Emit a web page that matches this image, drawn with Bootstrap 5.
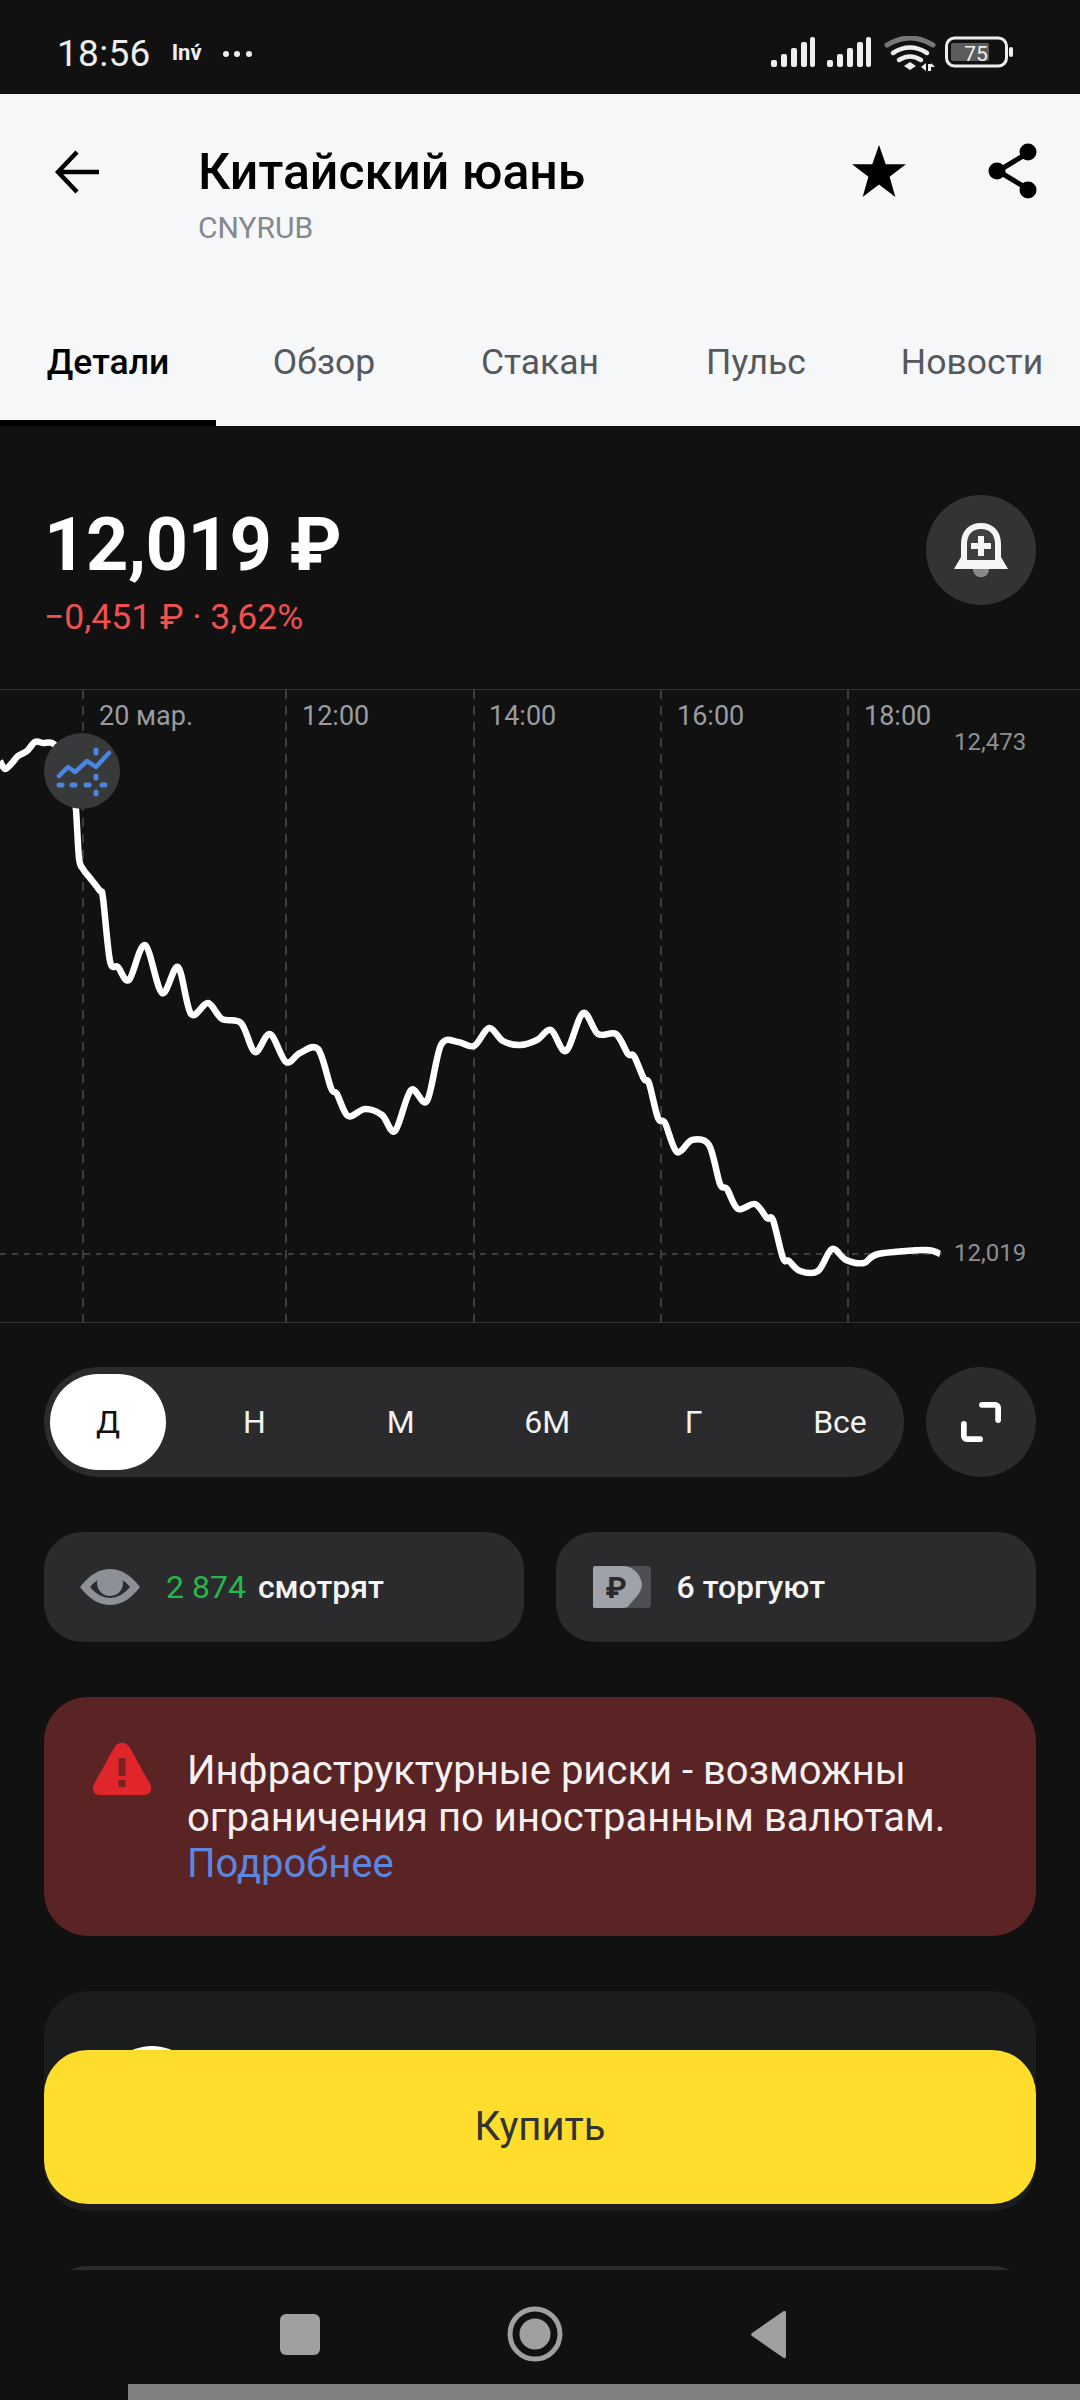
<!DOCTYPE html>
<html lang="ru">
<head>
<meta charset="utf-8">
<title>Китайский юань</title>
<link href="https://cdn.jsdelivr.net/npm/bootstrap@5.3.0/dist/css/bootstrap.min.css" rel="stylesheet">
<style>
html,body{margin:0;background:#111112;font-family:Roboto,"Liberation Sans",sans-serif}
.page-shell{width:1080px;height:2400px;overflow:hidden;background:#111112}
.status-strip{height:94px;padding:38px 64px 0 57px;color:#eee}
.clock{font-size:37px;line-height:32px;letter-spacing:.3px}
.inv{font-size:22px;font-weight:700;line-height:21px;margin-left:21px}
.dots{margin-left:19px}
.head-panel{background:#f6f7f9;height:332px;color:#000}
.title-row{height:226px;padding:49px 42px 0 55px}
.back-col{width:143px;padding-top:7px}
.asset-name{font-size:50px;font-weight:500;line-height:58px;margin:0;letter-spacing:0}
.asset-code{font-size:30px;line-height:32px;color:#85888d;margin-top:11px}
.tab-bar{height:106px;flex-wrap:nowrap}
.tab-bar .nav-link{width:216px;height:106px;padding:0 0 6px;text-align:center;font-size:35.500px;line-height:84px;color:#55585c;border-radius:0;background:none}
.tab-bar .nav-link.active{color:#000;background:none;font-weight:500;border-bottom:6px solid #000;padding-bottom:0}
.quote-panel{height:263px;padding:69px 44px 0 44px}
.price-big{font-size:74px;font-weight:700;line-height:60px;color:#fff;padding-top:20px;letter-spacing:-.5px}
.price-delta{font-size:35.500px;line-height:40px;color:#ef5050;margin-top:22px}
.round-btn{width:110px;height:110px;background:#333335;border:0;padding:0;border-radius:50%}
.chart-box{position:relative;height:634px;border-top:1px solid #333;border-bottom:1px solid #333}
.chart-box svg.plot{display:block}
.plot text{font-family:Roboto,"Liberation Sans",sans-serif}
.marker-chip{position:absolute;left:44px;top:43px;width:76px;height:76px;border-radius:50%;background:#38393b}
.range-row{padding:44px 44px 0 44px;gap:22px}
.range-pill{flex:1;height:110px;background:#2b2b2d;border-radius:55px;padding:7px 6px}
.range-pill .btn{width:116px;height:96px;padding:0;font-size:32px;color:#f2f2f2;border:0;border-radius:48px;background:none}
.range-pill .btn.active{background:#fff;color:#111}
.range-row .round-btn{background:#2b2b2d}
.stat-row{padding:55px 44px 0;gap:32px}
.stat-chip{flex:1;height:110px;background:#2b2b2d;border-radius:38px;font-size:32px;color:#f4f4f4;font-weight:500}
.num-green{color:#22b84b;font-weight:400}
.risk-box{margin:55px 44px 0;height:239px;background:#5a2324;border:0;border-radius:44px;padding:51px 30px 0 48px;color:#f6f0f0;font-size:40px;line-height:46.5px}
.risk-box a{color:#5b87e0;text-decoration:none;display:block}
.risk-txt{margin-left:35px;white-space:nowrap}
.dim-card{margin:55px 44px 0;height:220px;background:#1b1c1e;border:0;border-radius:44px}
.next-card{margin:55px 44px 0;height:220px;background:#2c2c2e;border:0;border-radius:44px}
.peek-dot{width:100px;height:100px;border-radius:50%;background:#fff;margin:55px 0 0 58px}
.buy-btn{position:absolute;left:44px;top:2050px;width:992px;height:154px;background:#ffdd2d;border:0;border-radius:44px;font-size:40px;color:#333;padding:0}
.buy-btn:hover{background:#ffdd2d;color:#333}
.sys-nav{height:130px;position:relative;background:#111112}
.sys-icons{height:114px;padding-left:280px;padding-top:45px}
.gray-bar{height:16px;background:#808080;margin-left:128px}
</style>
</head>
<body>
<div class="page-shell d-flex flex-column position-relative">

  <div class="status-strip d-flex align-items-start flex-shrink-0">
    <span class="clock">18:56</span>
    <span class="inv mt-1">Inv́</span>
    <svg class="dots mt-1" width="32" height="24" viewBox="0 0 32 24"><circle cx="5" cy="12" r="3" fill="#eee"/><circle cx="16" cy="12" r="3" fill="#eee"/><circle cx="28" cy="12" r="3" fill="#eee"/></svg>
    <svg class="ms-auto" width="245" height="36" viewBox="0 0 245 36" style="margin-top:-2px">
      <g fill="#eee">
        <rect x="0" y="24" width="6" height="7" rx="2"/><rect x="10" y="18" width="6" height="13" rx="2"/><rect x="20" y="12" width="6" height="19" rx="2"/><rect x="30" y="6" width="6" height="25" rx="2"/><rect x="39" y="1" width="5" height="30" rx="2"/>
        <rect x="56" y="24" width="6" height="7" rx="2"/><rect x="66" y="18" width="6" height="13" rx="2"/><rect x="76" y="12" width="6" height="19" rx="2"/><rect x="86" y="6" width="6" height="25" rx="2"/><rect x="95" y="1" width="5" height="30" rx="2"/>
      </g>
      <path d="M116 9q23-14 46 0" fill="none" stroke="#777" stroke-width="5" stroke-linecap="round"/>
      <path d="M122 17q17-11 34 0M128 24q11-7 22 0" fill="none" stroke="#eee" stroke-width="4.500" stroke-linecap="round"/>
      <path d="M133 30l6-4 6 4-6 4z" fill="#eee"/>
      <path d="M150 31l5-4v8zM157 28h3v7h-3zM160 27l4 4h-4z" fill="#eee"/>
      <rect x="175.500" y="2" width="60" height="28" rx="8" fill="none" stroke="#eee" stroke-width="3"/>
      <rect x="180" y="7" width="38" height="18" rx="2" fill="#5c5c5c"/>
      <text x="205" y="25" text-anchor="middle" fill="#eee" font-size="21" font-family="Roboto,sans-serif">75</text>
      <rect x="238" y="11" width="4" height="10" rx="2" fill="#eee"/>
    </svg>
  </div>

  <header class="head-panel flex-shrink-0">
    <div class="title-row d-flex align-items-start">
      <div class="back-col flex-shrink-0">
        <svg width="46" height="44" viewBox="0 0 46 44"><path d="M44 22H4M22 2 3 22l19 20" fill="none" stroke="#000" stroke-width="4.500"/></svg>
      </div>
      <div class="flex-grow-1">
        <h1 class="asset-name">Китайский юань</h1>
        <div class="asset-code">CNYRUB</div>
      </div>
      <svg class="flex-shrink-0" width="54" height="52" viewBox="0 0 56 54" style="margin-right:82px;margin-top:2px"><path d="M28 0l7 20h21L39 33l6 21-17-13-17 13 6-21L0 20h21z" fill="#000"/></svg>
      <svg class="flex-shrink-0" width="50" height="56" viewBox="0 0 50 56"><path d="M40 10 10 28l30 18" fill="none" stroke="#000" stroke-width="5"/><circle cx="40" cy="9" r="8.500" fill="#000"/><circle cx="9" cy="28" r="8.500" fill="#000"/><circle cx="40" cy="47" r="8.500" fill="#000"/></svg>
    </div>
    <nav class="nav tab-bar">
      <a class="nav-link active" href="#">Детали</a>
      <a class="nav-link" href="#">Обзор</a>
      <a class="nav-link" href="#">Стакан</a>
      <a class="nav-link" href="#">Пульс</a>
      <a class="nav-link" href="#">Новости</a>
    </nav>
  </header>

  <main class="flex-grow-1 overflow-hidden d-flex flex-column" style="min-height:0">
    <section class="quote-panel d-flex justify-content-between align-items-start flex-shrink-0">
      <div>
        <div class="price-big">12,019 ₽</div>
        <div class="price-delta">−0,451 ₽ · 3,62%</div>
      </div>
      <button class="round-btn d-flex align-items-center justify-content-center" type="button" aria-label="Уведомление">
        <svg width="56" height="56" viewBox="0 0 56 56"><path d="M8 22C8 8 17 1 28 1s20 7 20 21v13l7 12H1l7-12z" fill="#f5f5f5"/><path d="M14 38V22C14 12 20 7 28 7s14 5 14 15v16z" fill="#3f3f41"/><path d="M28 14v20M18 24h20" stroke="#f5f5f5" stroke-width="6"/><path d="M20 47h16c0 11-16 11-16 0z" fill="#8a8a8c"/></svg>
      </button>
    </section>

    <section class="chart-box flex-shrink-0">
      <svg class="plot" width="1080" height="632" viewBox="0 689 1080 632">
        <g stroke="#3d3d3f" stroke-width="2" stroke-dasharray="9 7" fill="none">
          <path d="M83 689V1321M286 689V1321M474 689V1321M661 689V1321M848 689V1321"/>
          <path d="M0 1253H945" stroke-dasharray="6 6"/>
        </g>
        <g fill="#9a9ca1" font-size="27">
          <text x="99" y="724">20 мар.</text>
          <text x="302" y="724">12:00</text>
          <text x="489" y="724">14:00</text>
          <text x="677" y="724">16:00</text>
          <text x="864" y="724">18:00</text>
        </g>
        <g fill="#8d8f93" font-size="24">
          <text x="954" y="749">12,473</text>
          <text x="954" y="1260">12,019</text>
        </g>
        <path id="priceLine" fill="none" stroke="#fff" stroke-width="6.500" stroke-linejoin="round" stroke-linecap="butt"/>
      </svg>
      <div class="marker-chip">
        <svg width="76" height="76" viewBox="0 0 76 76">
          <path d="M15 43l9-9 7 5 12-11 9 6 11-12 2-2" fill="none" stroke="#4a86e0" stroke-width="4.500" stroke-linecap="round" stroke-linejoin="round"/>
          <g stroke="#4a86e0" stroke-width="5" stroke-linecap="round" fill="none">
            <path d="M15 52h3M28 52h3M42 52h3M58 52h3M52 43v2M52 59v2M52 17v3"/>
          </g>
        </svg>
      </div>
    </section>

    <section class="range-row d-flex flex-shrink-0">
      <div class="range-pill d-flex justify-content-between" role="group">
        <button class="btn active" type="button">Д</button>
        <button class="btn" type="button">Н</button>
        <button class="btn" type="button">М</button>
        <button class="btn" type="button">6М</button>
        <button class="btn" type="button">Г</button>
        <button class="btn" type="button">Все</button>
      </div>
      <button class="round-btn d-flex align-items-center justify-content-center flex-shrink-0" type="button" aria-label="Развернуть">
        <svg width="40" height="40" viewBox="0 0 42 42"><path d="M22 3h14a3 3 0 0 1 3 3v13M3 23v13a3 3 0 0 0 3 3h14" fill="none" stroke="#fff" stroke-width="6" stroke-linecap="round"/></svg>
      </button>
    </section>

    <section class="stat-row d-flex flex-shrink-0">
      <div class="stat-chip d-flex align-items-center" style="padding-left:36px">
        <svg width="60" height="36" viewBox="0 0 60 36" style="margin-right:26px"><path d="M0 18C10 5 20 0 30 0s20 5 30 18C50 31 40 36 30 36S10 31 0 18z" fill="#8d9097"/><path d="M10 18c6-7 13-11 20-11s14 4 20 11c-6 7-13 11-20 11S16 25 10 18z" fill="#2b2b2d"/><circle cx="30" cy="14" r="13" fill="#8d9097"/><path d="M17 5h26v4H17z" fill="#8d9097"/></svg>
        <span class="num-green">2 874</span><span class="ms-2 ps-1">смотрят</span>
      </div>
      <div class="stat-chip d-flex align-items-center" style="padding-left:37px">
        <svg width="58" height="42" viewBox="0 0 58 42" style="margin-right:26px">
          <path d="M0 0h54a4 4 0 0 1 4 4v34a4 4 0 0 1-4 4H0z" fill="#4d4f53"/>
          <path d="M3 0h27c9 0 16 7 18 14 2 6 0 11-3 15l-8 9c-2 3-4 4-7 4H2a2 2 0 0 1-2-2V3a3 3 0 0 1 3-3z" fill="#9fa2a8"/>
          <text x="23" y="32" text-anchor="middle" font-size="30" font-weight="700" fill="#2b2b2d" font-family="Roboto,'DejaVu Sans',sans-serif">₽</text>
        </svg>
        <span>6 торгуют</span>
      </div>
    </section>

    <div class="risk-box alert d-flex flex-shrink-0 mb-0" role="alert">
      <svg class="flex-shrink-0" width="60" height="54" viewBox="0 0 60 54" style="margin-top:-6px"><path d="M22 6c4-7 12-7 16 0l20 36c3 6 0 11-6 11H8c-6 0-9-5-6-11z" fill="#e0262a"/><path d="M30 16v18" stroke="#7d2024" stroke-width="7"/><rect x="26.500" y="38" width="7" height="7" fill="#7d2024"/></svg>
      <div class="risk-txt">Инфраструктурные риски - возможны<br>ограничения по иностранным валютам.<a href="#">Подробнее</a></div>
    </div>

    <div class="card dim-card flex-shrink-0"><div class="peek-dot"></div></div>
    <div class="card next-card flex-shrink-0"></div>
  </main>

  <footer class="sys-nav flex-shrink-0">
    <div class="sys-icons d-flex align-items-start">
      <svg width="310" height="50" viewBox="0 0 310 50" style="overflow:visible">
        <rect x="0" y="-1" width="40" height="41" rx="6" fill="#a0a0a0"/>
        <circle cx="255" cy="19" r="25" fill="none" stroke="#a0a0a0" stroke-width="5"/>
        <circle cx="255" cy="19" r="15.500" fill="#a0a0a0"/>
      </svg>
      <svg width="38" height="48" viewBox="0 0 38 48" style="margin-left:160px;margin-top:-4px"><path d="M36 1v45a2 2 0 0 1-3 .5L2 25a2 2 0 0 1 0-3L33 .5A2 2 0 0 1 36 1z" fill="#a0a0a0"/></svg>
    </div>
    <div class="gray-bar"></div>
  </footer>

  <button class="btn buy-btn" type="button">Купить</button>
</div>

<script>
(function(){
  var p=[[0,760],[5,768],[12,762],[18,755],[27,750],[35,741],[43,742],[55,744],[72,770],[76,809],[79,857],[83,868],[90,877],[100,890],[103,897],[110,960],[118,966],[129,979],[145,944],[162,992],[178,966],[191,1013],[208,1002],[222,1018],[241,1022],[255,1051],[270,1033],[286,1061],[300,1052],[318,1048],[331,1087],[337,1093],[348,1115],[365,1108],[382,1114],[395,1130],[411,1089],[427,1100],[441,1044],[458,1041],[474,1045],[489,1027],[503,1040],[520,1044],[537,1039],[551,1029],[566,1050],[583,1012],[598,1033],[616,1033],[628,1053],[634,1055],[644,1078],[649,1082],[658,1117],[665,1122],[677,1151],[692,1139],[709,1144],[720,1183],[727,1188],[738,1208],[755,1203],[767,1217],[773,1219],[783,1257],[789,1260],[800,1270],[818,1270],[832,1248],[846,1259],[864,1262],[878,1253],[926,1249],[940,1253]];
  var d='M'+p[0][0]+' '+p[0][1];
  for(var i=0;i<p.length-1;i++){
    var a=p[Math.max(i-1,0)],b=p[i],c=p[i+1],e=p[Math.min(i+2,p.length-1)],t=0.16;
    d+='C'+(b[0]+(c[0]-a[0])*t).toFixed(1)+' '+(b[1]+(c[1]-a[1])*t).toFixed(1)+' '+(c[0]-(e[0]-b[0])*t).toFixed(1)+' '+(c[1]-(e[1]-b[1])*t).toFixed(1)+' '+c[0]+' '+c[1];
  }
  document.getElementById('priceLine').setAttribute('d',d);
})();
</script>
<script src="https://cdn.jsdelivr.net/npm/bootstrap@5.3.0/dist/js/bootstrap.bundle.min.js"></script>
</body>
</html>
